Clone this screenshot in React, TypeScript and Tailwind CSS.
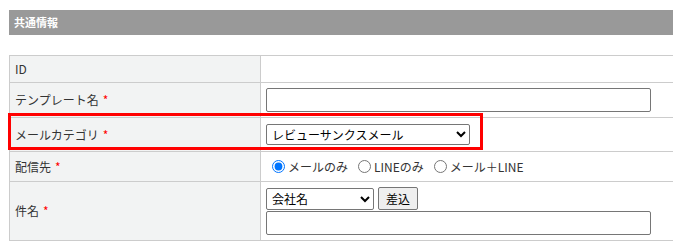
import React from "react";

const Req = () => <span className="text-[#ff0000] ml-[4px]">*</span>;

export default function App() {
  const font = { fontFamily: '"Noto Sans CJK JP", "Noto Sans", sans-serif' };
  return (
    <div className="w-[673px] h-[250px] bg-white overflow-hidden relative text-[12px] text-[#333333]" style={font}>
      <div className="pt-[10px] pl-[9px]">
        <div className="h-[25px] bg-[#999999] text-white font-bold text-[11px] flex items-center pl-[5px] w-[680px]">
          共通情報
        </div>
        <table className="mt-[20px] border-collapse w-[700px]">
          <tbody>
            <tr className="h-[27px]">
              <td className="w-[251px] border border-[#cccccc] bg-[#f2f3f3] pl-[5px] align-middle">ID</td>
              <td className="border border-[#cccccc] px-[5px]"></td>
            </tr>
            <tr className="h-[35px]">
              <td className="border border-[#cccccc] bg-[#f2f3f3] pl-[5px]">テンプレート名<Req /></td>
              <td className="border border-[#cccccc] px-[5px]">
                <input type="text" className="block w-[385px] h-[24px] border border-[#767676] rounded-[2px] bg-white" />
              </td>
            </tr>
            <tr className="h-[34px]">
              <td className="border border-[#cccccc] bg-[#f2f3f3] pl-[5px]">メールカテゴリ<Req /></td>
              <td className="border border-[#cccccc] px-[5px]">
                <select className="block w-[204px] h-[21px] border border-[#767676] rounded-[2px] bg-white text-[12px] text-black pl-[1px]" style={font} defaultValue="a">
                  <option value="a">レビューサンクスメール</option>
                </select>
              </td>
            </tr>
            <tr className="h-[30px]">
              <td className="border border-[#cccccc] bg-[#f2f3f3] pl-[5px]">配信先<Req /></td>
              <td className="border border-[#cccccc] pl-[5px]">
                <div className="flex items-center">
                  <label className="flex items-center mr-[10px]">
                    <input type="radio" name="r" defaultChecked className="m-0 ml-[6px] mr-[3px] w-[13px] h-[13px]" />
                    メールのみ
                  </label>
                  <label className="flex items-center mr-[10px]">
                    <input type="radio" name="r" className="m-0 mr-[3px] w-[13px] h-[13px]" />
                    LINEのみ
                  </label>
                  <label className="flex items-center">
                    <input type="radio" name="r" className="m-0 mr-[3px] w-[13px] h-[13px]" />
                    メール＋LINE
                  </label>
                </div>
              </td>
            </tr>
            <tr className="h-[59px]">
              <td className="border border-[#cccccc] bg-[#f2f3f3] pl-[5px]">件名<Req /></td>
              <td className="border border-[#cccccc] px-[5px]">
                <div className="flex items-center gap-[4px]">
                  <select className="block w-[108px] h-[22px] border border-[#767676] rounded-[2px] bg-white text-[12px] text-black pl-[1px]" style={font} defaultValue="a">
                    <option value="a">会社名</option>
                  </select>
                  <button className="h-[23px] w-[40px] border border-[#767676] rounded-[2px] bg-[#efefef] text-[12px] text-black" style={font}>差込</button>
                </div>
                <input type="text" className="block mt-[1px] w-[385px] h-[24px] border border-[#767676] rounded-[2px] bg-white" />
              </td>
            </tr>
          </tbody>
        </table>
      </div>
      <div className="absolute left-[8px] top-[113px] w-[475px] h-[37px] border-[3px] border-[#ff0000] pointer-events-none" />
    </div>
  );
}
